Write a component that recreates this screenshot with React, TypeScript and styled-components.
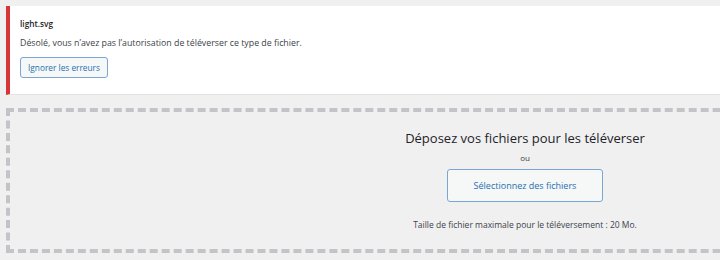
import styled, { createGlobalStyle } from "styled-components";

const GlobalStyle = createGlobalStyle`
  html, body {
    margin: 0;
    padding: 0;
    background: #f0f0f1;
    overflow: hidden;
  }
  body {
    font-family: "Open Sans", "Noto Sans", sans-serif;
    color: #3c434a;
  }
`;

const Page = styled.div`
  width: 1038px;
  padding: 6px 6px 0 6px;
  display: flex;
  flex-direction: column;
  gap: 13px;
`;

const Notice = styled.div`
  background: #fff;
  border-left: 4px solid #d63638;
  border-bottom: 1px solid #e2e2e4;
  padding: 10px 10px 16px 10px;
  display: flex;
  flex-direction: column;
  align-items: flex-start;
`;

const FileName = styled.div`
  font-size: 8.3px;
  font-weight: 600;
  color: #1d2327;
  line-height: 16px;
`;

const Message = styled.div`
  font-size: 8.8px;
  color: #3c434a;
  line-height: 16px;
  margin-top: 3px;
`;

const SmallButton = styled.button`
  margin-top: 6px;
  height: 21px;
  width: 88px;
  padding: 0;
  font-family: inherit;
  font-size: 8.3px;
  color: #2271b1;
  background: #f6f7f7;
  border: 1px solid #7aa6d3;
  border-radius: 3px;
  cursor: pointer;
`;

const DropZone = styled.div`
  height: 145px;
  box-sizing: border-box;
  border: 4px dashed #c3c4c7;
  display: flex;
  flex-direction: column;
  align-items: center;
  padding-top: 15px;
`;

const DropTitle = styled.div`
  font-size: 13px;
  color: #1d2327;
  line-height: 22px;
`;

const Or = styled.div`
  font-size: 8px;
  color: #3c434a;
  line-height: 14px;
  margin-top: 2px;
`;

const HeroButton = styled.button`
  margin-top: 4px;
  height: 33px;
  width: 156px;
  padding: 0;
  font-family: inherit;
  font-size: 9px;
  color: #2271b1;
  background: #f6f7f7;
  border: 1px solid #7aa6d3;
  border-radius: 3px;
  cursor: pointer;
`;

const MaxSize = styled.div`
  margin-top: 15px;
  font-size: 8.5px;
  color: #3c434a;
  line-height: 16px;
`;

export default function App() {
  return (
    <>
      <GlobalStyle />
      <Page>
        <Notice>
          <FileName>light.svg</FileName>
          <Message>
            Désolé, vous n’avez pas l’autorisation de téléverser ce type de fichier.
          </Message>
          <SmallButton>Ignorer les erreurs</SmallButton>
        </Notice>
        <DropZone>
          <DropTitle>Déposez vos fichiers pour les téléverser</DropTitle>
          <Or>ou</Or>
          <HeroButton>Sélectionnez des fichiers</HeroButton>
          <MaxSize>Taille de fichier maximale pour le téléversement : 20 Mo.</MaxSize>
        </DropZone>
      </Page>
    </>
  );
}
